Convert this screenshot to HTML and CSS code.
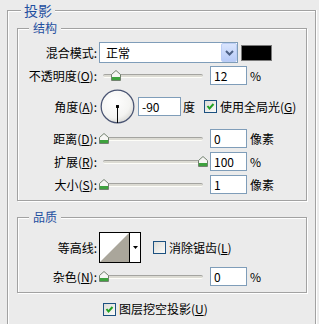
FILE: index.html
```html
<!DOCTYPE html>
<html lang="zh">
<head>
  <meta charset="UTF-8" />
  <title>投影</title>
  <link rel="stylesheet" href="styles.css">
</head>
<body>
  <fieldset class="group outer">
    <legend class="title big">投影</legend>

    <fieldset class="group">
      <legend class="title">结构</legend>

      <div class="row row-blend">
        <span class="label">混合模式:</span>
        <div class="select">
          <span class="select-text">正常</span>
          <span class="select-btn">
            <svg width="9" height="6" viewBox="0 0 9 6"><path d="M1 1 L4.5 4.5 L8 1" fill="none" stroke="#4d6185" stroke-width="2"/></svg>
          </span>
        </div>
        <div class="swatch"></div>
      </div>

      <div class="row row-slider r2">
        <span class="label">不透明度(<u>O</u>):</span>
        <div class="slider">
          <div class="track"></div>
          <span class="thumb" style="left: 12px"><svg width="10" height="11" viewBox="0 0 10 11"><path d="M0.5 4.5 L5 0.5 L9.5 4.5 L9.5 10.5 L0.5 10.5 Z" fill="#f6f6f4" stroke="#72826f"/><rect x="1" y="7" width="8" height="3" fill="#3ea23e"/></svg></span>
        </div>
        <input class="num" value="12">
        <span class="unit">%</span>
      </div>

      <div class="row row-angle">
        <span class="label">角度(<u>A</u>):</span>
        <svg class="dial" width="36" height="36" viewBox="0 0 36 36">
          <defs>
            <radialGradient id="dialFill" cx="0.4" cy="0.35" r="0.7">
              <stop offset="0" stop-color="#ffffff"/>
              <stop offset="0.7" stop-color="#f4f4f2"/>
              <stop offset="1" stop-color="#d8d8d4"/>
            </radialGradient>
          </defs>
          <circle cx="18" cy="18" r="16.8" fill="url(#dialFill)" stroke="#4a5573" stroke-width="1.3"/>
          <line x1="18" y1="18" x2="18" y2="35" stroke="#000" stroke-width="1"/>
          <rect x="16.5" y="16.5" width="3" height="3" fill="#000"/>
        </svg>
        <input class="num angle" value="-90">
        <span class="unit deg">度</span>
        <span class="check on">
          <svg width="11" height="11" viewBox="0 0 11 11"><path d="M2.5 5 L4.5 7.5 L8.5 3" fill="none" stroke="#21a121" stroke-width="2"/></svg>
        </span>
        <span class="check-label">使用全局光(<u>G</u>)</span>
      </div>

      <div class="row row-slider r4">
        <span class="label">距离(<u>D</u>):</span>
        <div class="slider">
          <div class="track"></div>
          <span class="thumb" style="left: 0px"><svg width="10" height="11" viewBox="0 0 10 11"><path d="M0.5 4.5 L5 0.5 L9.5 4.5 L9.5 10.5 L0.5 10.5 Z" fill="#f6f6f4" stroke="#72826f"/><rect x="1" y="7" width="8" height="3" fill="#3ea23e"/></svg></span>
        </div>
        <input class="num" value="0">
        <span class="unit">像素</span>
      </div>

      <div class="row row-slider r5">
        <span class="label">扩展(<u>R</u>):</span>
        <div class="slider">
          <div class="track"></div>
          <span class="thumb" style="left: 99px"><svg width="10" height="11" viewBox="0 0 10 11"><path d="M0.5 4.5 L5 0.5 L9.5 4.5 L9.5 10.5 L0.5 10.5 Z" fill="#f6f6f4" stroke="#72826f"/><rect x="1" y="7" width="8" height="3" fill="#3ea23e"/></svg></span>
        </div>
        <input class="num" value="100">
        <span class="unit">%</span>
      </div>

      <div class="row row-slider r6">
        <span class="label">大小(<u>S</u>):</span>
        <div class="slider">
          <div class="track"></div>
          <span class="thumb" style="left: 0px"><svg width="10" height="11" viewBox="0 0 10 11"><path d="M0.5 4.5 L5 0.5 L9.5 4.5 L9.5 10.5 L0.5 10.5 Z" fill="#f6f6f4" stroke="#72826f"/><rect x="1" y="7" width="8" height="3" fill="#3ea23e"/></svg></span>
        </div>
        <input class="num" value="1">
        <span class="unit">像素</span>
      </div>
    </fieldset>

    <fieldset class="group quality">
      <legend class="title">品质</legend>

      <div class="row row-contour">
        <span class="label">等高线:</span>
        <div class="contour">
          <svg class="contour-preview" width="29" height="29" viewBox="0 0 29 29"><polygon points="0,29 29,0 29,29" fill="#aaa69b"/></svg>
          <span class="contour-btn">
            <svg width="5" height="3" viewBox="0 0 5 3"><polygon points="0,0 5,0 2.5,3" fill="#000"/></svg>
          </span>
        </div>
        <span class="check off"></span>
        <span class="check-label">消除锯齿(<u>L</u>)</span>
      </div>

      <div class="row row-slider r8">
        <span class="label">杂色(<u>N</u>):</span>
        <div class="slider">
          <div class="track"></div>
          <span class="thumb" style="left: 0px"><svg width="10" height="11" viewBox="0 0 10 11"><path d="M0.5 4.5 L5 0.5 L9.5 4.5 L9.5 10.5 L0.5 10.5 Z" fill="#f6f6f4" stroke="#72826f"/><rect x="1" y="7" width="8" height="3" fill="#3ea23e"/></svg></span>
        </div>
        <input class="num" value="0">
        <span class="unit">%</span>
      </div>
    </fieldset>

    <div class="row knockout">
      <span class="check on">
        <svg width="11" height="11" viewBox="0 0 11 11"><path d="M2.5 5 L4.5 7.5 L8.5 3" fill="none" stroke="#21a121" stroke-width="2"/></svg>
      </span>
      <span class="check-label">图层挖空投影(<u>U</u>)</span>
    </div>
  </fieldset>
</body>
</html>
```

FILE: styles.css
```css
body {
  margin: 0;
  width: 319px;
  height: 324px;
  overflow: hidden;
  background-color: #ebebeb;
  font-family: "Noto Sans CJK SC", "Liberation Sans", sans-serif;
  font-size: 12px;
  line-height: 16px;
  color: #000;
}
.group {
  margin: 2px 0 0;
  padding: 0 0 6px;
  min-width: 0;
  border: 1px solid #a2a2a2;
  box-shadow: 1px 1px 0 #fff, inset 1px 1px 0 #fff;
}
.outer {
  margin: 2px 3px 0 7px;
  padding: 0 8px 8px 9px;
  border-bottom: none;
  box-shadow: 1px 0 0 #fff, inset 1px 1px 0 #fff;
}
.quality {
  margin-top: 8px;
}
.title {
  margin-left: 11px;
  padding: 0 4px;
  background-color: #ebebeb;
  color: #1f4fa0;
  line-height: 16px;
}
.title.big {
  margin-left: 4px;
  padding: 0 3px;
  font-size: 14px;
}
.row {
  display: flex;
  align-items: center;
}
.label {
  flex: none;
  width: 79px;
  text-align: right;
  white-space: nowrap;
}
.row-blend {
  margin-top: 6px;
  height: 21px;
}
.r2 { margin-top: 3px; }
.row-angle { margin-top: 4px; height: 35px; }
.r4 { margin-top: 5px; }
.r5, .r6 { margin-top: 4px; }
.row-contour { margin-top: 7px; height: 31px; }
.r8 { margin-top: 4px; }
.row-slider { height: 19px; }

.select {
  display: flex;
  align-items: center;
  box-sizing: border-box;
  width: 139px;
  height: 21px;
  margin-left: 2px;
  border: 1px solid #7f9db9;
  background-color: #fff;
}
.select-text {
  flex: 1;
  padding-left: 6px;
}
.select-btn {
  display: flex;
  align-items: center;
  justify-content: center;
  box-sizing: border-box;
  width: 16px;
  height: 19px;
  border: 1px solid #bccef5;
  border-radius: 2px;
  background: linear-gradient(#dae5fd, #b7cbf7);
}
.swatch {
  box-sizing: border-box;
  width: 31px;
  height: 16px;
  margin-left: 3px;
  border: 1px solid #7a7a7a;
  background-color: #000;
}

.slider {
  position: relative;
  flex: none;
  width: 109px;
  height: 19px;
  margin-left: 2px;
}
.track {
  position: absolute;
  left: 4px;
  right: 5px;
  top: 8px;
  height: 2px;
  border-top: 1px solid #a4a4a0;
  border-bottom: 1px solid #fdfdf8;
  border-radius: 2px;
  background-color: #dcdbd3;
}
.thumb {
  position: absolute;
  top: 4px;
  width: 10px;
  height: 11px;
  display: block;
}
.thumb svg {
  display: block;
}

.num {
  box-sizing: border-box;
  width: 37px;
  height: 19px;
  margin: 0 0 0 2px;
  padding: 0 3px;
  border: 1px solid #7f9db9;
  background-color: #fff;
  font: inherit;
  color: #000;
  outline: none;
}
.unit {
  margin-left: 3px;
}

.dial {
  display: block;
  margin-left: 3px;
  width: 35px;
  height: 35px;
}
.num.angle {
  width: 43px;
  margin-left: 3px;
}
.unit.deg {
  margin-left: 2px;
}
.check {
  display: flex;
  align-items: center;
  justify-content: center;
  box-sizing: border-box;
  flex: none;
  width: 13px;
  height: 13px;
  border: 1px solid #1c5180;
  background: linear-gradient(135deg, #dcdcd7, #fbfbf9);
}
.row-angle .check {
  margin-left: 9px;
}
.check-label {
  margin-left: 3px;
  white-space: nowrap;
}

.contour {
  display: flex;
  box-sizing: border-box;
  width: 42px;
  height: 31px;
  margin-left: 2px;
  border: 1px solid #000;
  background-color: #fff;
}
.contour-preview {
  display: block;
  border-right: 1px solid #000;
}
.contour-btn {
  display: flex;
  align-items: center;
  justify-content: center;
  flex: 1;
}
.row-contour .check {
  margin-left: 12px;
}

.knockout {
  margin-top: 8px;
  padding-left: 86px;
}
```
